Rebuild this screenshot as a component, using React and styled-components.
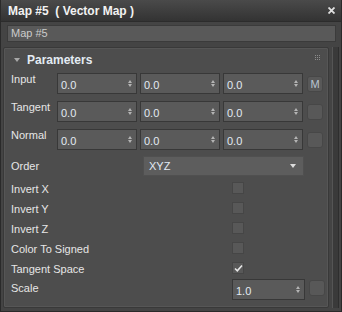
import React from 'react';
import styled, { createGlobalStyle } from 'styled-components';

const GlobalStyle = createGlobalStyle`
  html, body { margin: 0; padding: 0; background: #444; }
  body { font-family: "Liberation Sans", Arial, sans-serif; }
`;

const Window = styled.div`
  width: 342px;
  height: 312px;
  box-sizing: border-box;
  background: #444444;
  border: 1px solid #2a2a2a;
  border-top: none;
  display: flex;
  flex-direction: column;
  overflow: hidden;
`;

const TitleBar = styled.div`
  height: 21px;
  flex: none;
  display: flex;
  align-items: center;
  justify-content: space-between;
  padding: 0 6px 0 7px;
  background: linear-gradient(#4a4a4a, #333333);
  border-bottom: 1px solid #2c2c2c;
  color: #f2f2f2;
  font-weight: bold;
  font-size: 12px;
  white-space: pre;
`;

const NameRow = styled.div`
  padding: 3px 5px 0 6px;
`;

const NameInput = styled.div`
  height: 17px;
  box-sizing: border-box;
  background: #595959;
  border: 1px solid #3b3b3b;
  color: #cbcbcb;
  font-size: 11px;
  line-height: 15px;
  padding-left: 3px;
`;

const Body = styled.div`
  flex: 1;
  display: flex;
  gap: 3px;
  padding: 5px 2px 3px 2px;
  min-height: 0;
`;

const Panel = styled.div`
  width: 329px;
  box-sizing: border-box;
  background: #4d4d4d;
  border: 1px solid #393939;
  box-shadow: inset 0 0 0 1px #565656;
  border-radius: 2px;
  display: flex;
  flex-direction: column;
  padding: 0 0 0 7px;
`;

const Scrollbar = styled.div`
  width: 5px;
  background: #3a3a3a;
  border-left: 1px solid #555;
  border-right: 1px solid #2e2e2e;
`;

const Header = styled.div`
  height: 20px;
  display: flex;
  align-items: center;
  padding-top: 2px;
  color: #e3ebf3;
  font-weight: bold;
  font-size: 12px;
  position: relative;
`;

const Caret = styled.span`
  width: 0;
  height: 0;
  border-left: 3px solid transparent;
  border-right: 3px solid transparent;
  border-top: 4px solid #a8a8a8;
  margin: 0 7px 0 3px;
`;

const Grip = styled.svg`
  position: absolute;
  right: 7px;
  top: 7px;
`;

const Label = styled.div`
  width: ${p => p.$w || 46}px;
  color: #e6e6e6;
  font-size: 11px;
  line-height: 13px;
  white-space: nowrap;
  flex: none;
`;

const SpinRow = styled.div`
  display: flex;
  align-items: flex-start;
  height: 21px;
  margin-top: ${p => p.$top ?? 7}px;
`;

const Spinner = styled.div`
  width: ${p => p.$w || 80}px;
  height: 21px;
  box-sizing: border-box;
  margin-right: 3px;
  background: #5a5a5a;
  border: 1px solid #383838;
  color: #e2eaf2;
  font-size: 11px;
  padding: 5px 0 0 3px;
  line-height: 13px;
  position: relative;
  flex: none;
`;

const Arrows = styled.span`
  position: absolute;
  right: 4px;
  top: 6px;
  display: flex;
  flex-direction: column;
  gap: 1px;
  &::before, &::after {
    content: '';
    width: 0;
    height: 0;
    border-left: 2px solid transparent;
    border-right: 2px solid transparent;
  }
  &::before { border-bottom: 3px solid #b4b4b4; }
  &::after { border-top: 3px solid #b4b4b4; }
`;

const SmallButton = styled.div`
  width: 16px;
  height: 16px;
  box-sizing: border-box;
  margin-top: ${p => p.$top ?? 3}px;
  margin-left: 1px;
  background: #585858;
  border: 1px solid #474747;
  border-radius: 3px;
  color: #b8c4d0;
  font-size: 11px;
  line-height: 14px;
  text-align: center;
`;

const OrderRow = styled.div`
  display: flex;
  align-items: center;
  height: 20px;
  margin-top: 6px;
`;

const Dropdown = styled.div`
  width: 161px;
  height: 20px;
  box-sizing: border-box;
  background: #5d5d5d;
  border: 1px solid #505050;
  color: #e2eaf2;
  font-size: 11px;
  line-height: 18px;
  padding: 0 7px 0 5px;
  display: flex;
  justify-content: space-between;
  align-items: center;
`;

const DropArrow = styled.span`
  width: 0;
  height: 0;
  border-left: 3px solid transparent;
  border-right: 3px solid transparent;
  border-top: 4px solid #dcdcdc;
`;

const CheckRow = styled.div`
  display: flex;
  align-items: center;
  height: 20px;
  margin-top: ${p => p.$top || 0}px;
`;

const Checkbox = styled.div`
  width: 12px;
  height: 12px;
  box-sizing: border-box;
  background: #585858;
  border: 1px solid #464646;
  margin-top: -2px;
  display: flex;
  align-items: center;
  justify-content: center;
`;

function Spin({ value, w }) {
  return (
    <Spinner $w={w}>
      {value}
      <Arrows />
    </Spinner>
  );
}

const checks = [
  ['Invert X', false],
  ['Invert Y', false],
  ['Invert Z', false],
  ['Color To Signed', false],
  ['Tangent Space', true],
];

export default function App() {
  return (
    <>
      <GlobalStyle />
      <Window>
        <TitleBar>
          <span>Map #5  ( Vector Map )</span>
          <svg width="7" height="7" viewBox="0 0 7 7">
            <path d="M0.5 0.5 L6.5 6.5 M6.5 0.5 L0.5 6.5" stroke="#e0e0e0" strokeWidth="1.8" />
          </svg>
        </TitleBar>
        <NameRow>
          <NameInput>Map #5</NameInput>
        </NameRow>
        <Body>
          <Panel>
            <Header>
              <Caret />
              Parameters
              <Grip width="6" height="6" viewBox="0 0 6 6">
                {[0, 2, 4].map(x =>
                  [0, 2, 4].map(y => (
                    <rect key={`${x}-${y}`} x={x} y={y} width="1" height="1" fill="#8c8c8c" />
                  ))
                )}
              </Grip>
            </Header>
            {['Input', 'Tangent', 'Normal'].map((name, i) => (
              <SpinRow key={name} $top={i === 0 ? 3 : 7}>
                <Label>{name}</Label>
                <Spin value="0.0" />
                <Spin value="0.0" />
                <Spin value="0.0" />
                <SmallButton>{i === 0 ? 'M' : ''}</SmallButton>
              </SpinRow>
            ))}
            <OrderRow>
              <Label $w={132}>Order</Label>
              <Dropdown>
                XYZ
                <DropArrow />
              </Dropdown>
            </OrderRow>
            {checks.map(([name, on], i) => (
              <CheckRow key={name} $top={i === 0 ? 3 : 0}>
                <Label $w={221}>{name}</Label>
                <Checkbox>
                  {on && (
                    <svg width="9" height="8" viewBox="0 0 9 8">
                      <path d="M1 4.5 L3.3 6.8 L8 1.5" stroke="#e8e8e8" strokeWidth="1.6" fill="none" />
                    </svg>
                  )}
                </Checkbox>
              </CheckRow>
            ))}
            <SpinRow $top={0}>
              <Label $w={221} style={{ marginTop: 3 }}>Scale</Label>
              <Spin value="1.0" w={73} />
              <SmallButton $top={1}>{''}</SmallButton>
            </SpinRow>
          </Panel>
          <Scrollbar />
        </Body>
      </Window>
    </>
  );
}
